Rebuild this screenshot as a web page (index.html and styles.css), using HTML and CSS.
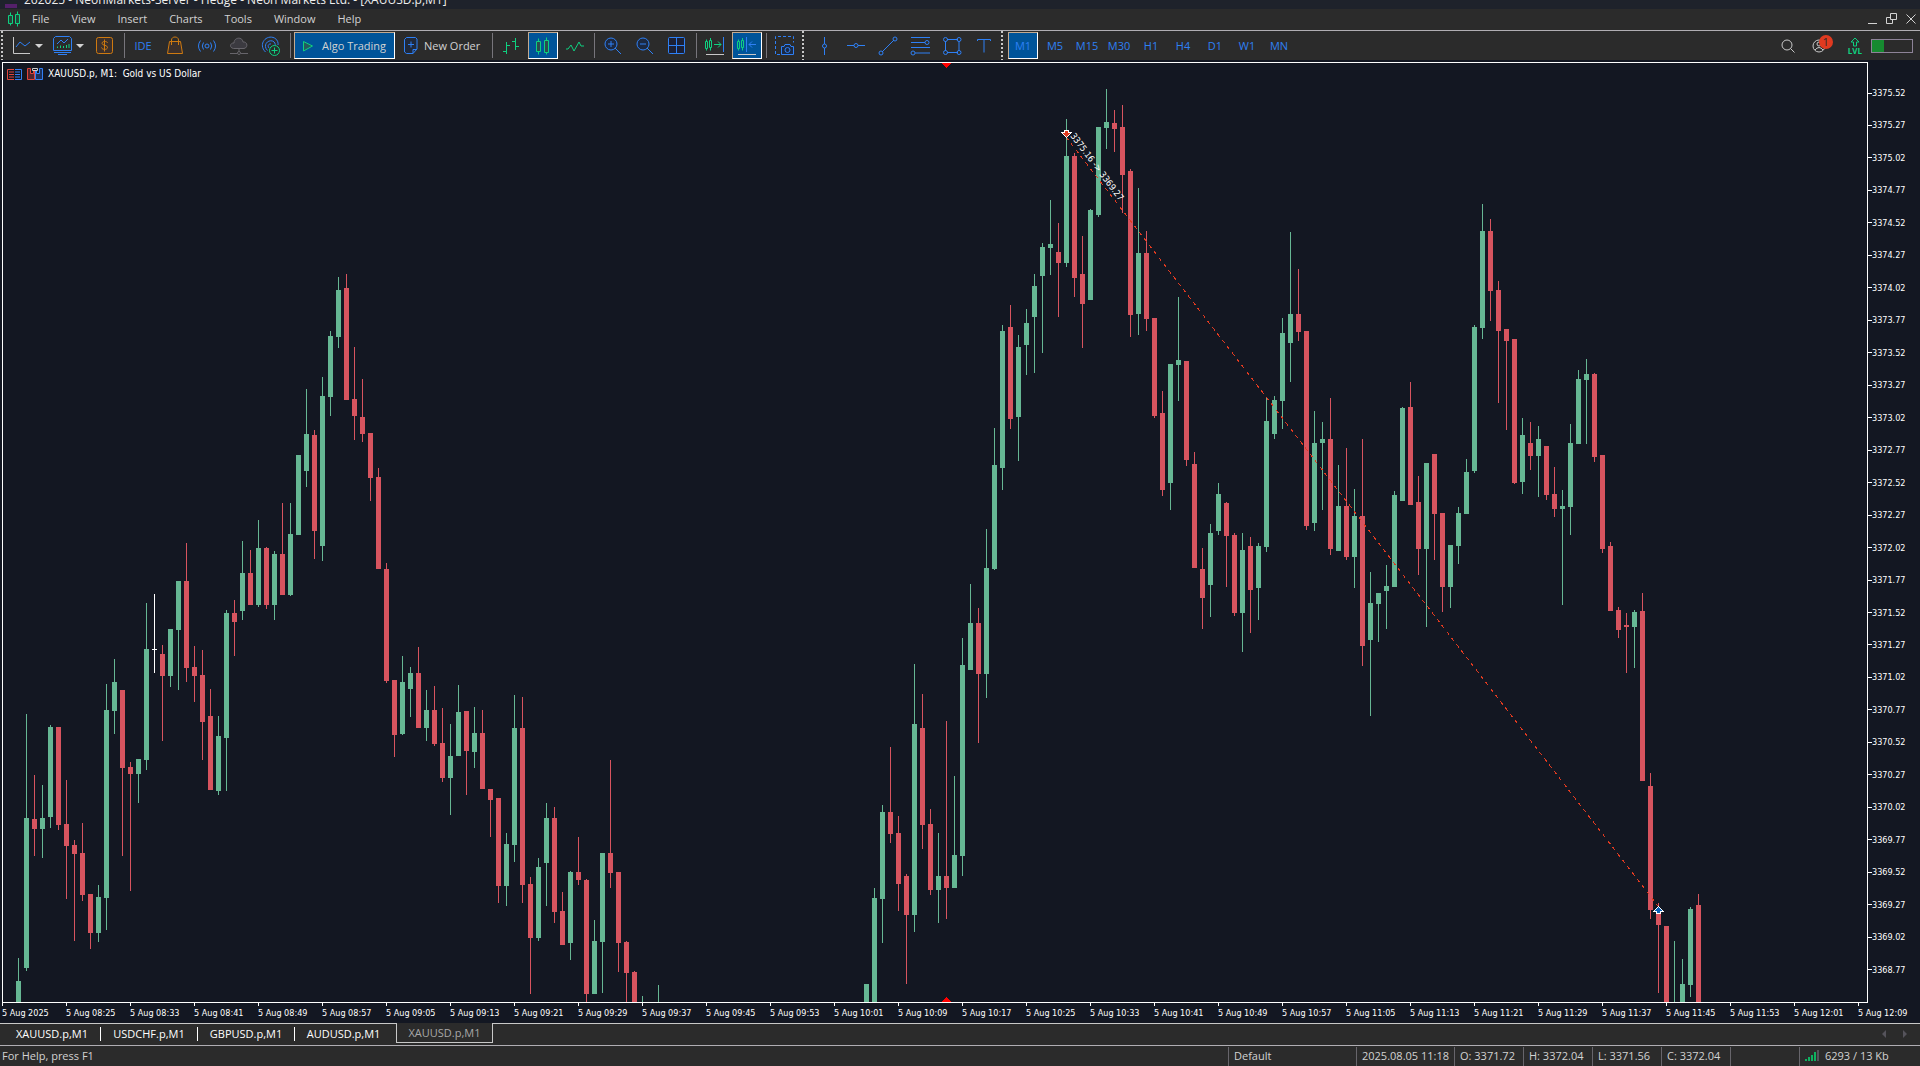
FILE: index.html
```html
<!DOCTYPE html>
<html lang="en">
<head>
    <meta charset="UTF-8">
    <meta name="viewport" content="width=device-width, initial-scale=1.0">
    <title>XAUUSD.p,M1</title>
    <link rel="stylesheet" href="styles.css">
</head>
<body>

<!-- Window title -->
<header class="title-bar">
    <span class="app-mark"></span>
    <span>262025 - NeonMarkets-Server - Hedge - Neon Markets Ltd. - [XAUUSD.p,M1]</span>
</header>

<!-- Main menu -->
<nav class="menu-bar">
    <svg class="menu-logo" width="12" height="16" viewBox="0 0 12 16"><path d="M.5 4.500h4v8h-4zM7.500 3.500h4v9h-4zM2.500 1.500v3M2.500 12.500v2M9.500.5v3M9.500 12.500v3"/></svg>
    <button>File</button>
    <button>View</button>
    <button>Insert</button>
    <button>Charts</button>
    <button>Tools</button>
    <button>Window</button>
    <button>Help</button>
    <div class="window-buttons">
        <button aria-label="Minimize"><svg width="10" height="12"><path d="M0 10.500h9"/></svg></button>
        <button aria-label="Restore"><svg width="12" height="12"><path d="M4.500.5h6v6h-6zM4 4.500H.5v6h6V7"/></svg></button>
        <button aria-label="Close"><svg width="10" height="12"><path d="M.5 1.500l9 9M9.500 1.500l-9 9"/></svg></button>
    </div>
</nav>

<!-- Toolbar -->
<div class="toolbar">
    <i class="grip"></i>
    <button class="split" aria-label="Indicators">
        <svg class="blue" width="20" height="20"><path class="gray" d="M1.500 1v16.500H18"/><path d="M4 11l4-5 5 4 5-4"/></svg>
        <i class="arrow"></i>
    </button>
    <button class="split" aria-label="Templates">
        <svg class="blue" width="20" height="20"><path d="M2.500.5h14l2 2v12H.5v-12zM1 16.500h17M5 18.500h9M4 8l4-4 3 3 4-4"/><path class="green" d="M4.500 12v-1.500M7.500 12V9.500M10.500 12v-2M13.500 12V9M16 12V8"/></svg>
        <i class="arrow"></i>
    </button>
    <button class="tool" aria-label="Symbols"><svg class="orange" width="20" height="20"><rect x="1.500" y="1.500" width="16" height="16" rx="2" fill="#3c302b"/><path d="M12.500 7c0-2-5.500-2.200-5.500.3C7 10 12.500 8.500 12.500 11.500c0 2.500-5.500 2.500-6 0M9.500 3.500v12"/></svg></button>
    <i class="sep"></i>
    <button class="tool text-tool">IDE</button>
    <button class="tool" aria-label="Market"><svg class="orange" width="20" height="20"><path fill="#3c302b" d="M4.500 5.500h11l2 12h-15z"/><path d="M6.500 9V4c0-4 7-4 7 0v5"/></svg></button>
    <button class="tool" aria-label="Signals"><svg class="blue" width="20" height="20"><circle cx="10" cy="10" r="2"/><path d="M6.500 6.500q-2.500 3.500 0 7M13.500 6.500q2.500 3.500 0 7M3.500 4.500q-4 5.500 0 11M16.500 4.500q4 5.500 0 11"/></svg></button>
    <button class="tool" aria-label="VPS"><svg class="dim" width="20" height="20"><path fill="#3b3a40" d="M4.500 12.500c-5-1-3-6 .5-5.500 0-6 8.500-6.500 9-1 5-.5 5 6 1 6.500z"/><path d="M10 12.500v3M1 17.500h7M12 17.500h7"/><circle cx="10" cy="17" r="1.500"/></svg></button>
    <button class="tool" aria-label="Community"><svg class="blue" width="20" height="20"><path d="M4.500 16c-8-8 1-18 9-14 3 1.500 4 5 3.500 7M6.500 14.500C1.500 9.500 6.500 3.500 11.500 5c2.500 1 3 3 2.500 4.500M8 12C6 9.500 8 7.500 10 8"/><g class="green"><circle cx="13.500" cy="14.500" r="5" fill="#24302c"/><path d="M10.500 14.500h6M13.500 11.500v6"/></g></svg></button>
    <i class="sep"></i>
    <button class="wide algo active"><svg class="green" width="12" height="12"><path fill="#265b5e" d="M1.500 1.500l9 4.500-9 5z"/></svg>Algo Trading</button>
    <button class="wide order"><svg class="blue" width="14" height="18"><path fill="#20293b" d="M2.500.5h9l1.500 1.500v10l-4 4.500H2.500L.5 15V2.500z"/><path d="M4 7.500h6M7 4.500v6M9 16.500v-4h4"/></svg>New Order</button>
    <i class="sep"></i>
    <button class="tool" aria-label="Bar chart"><svg class="green" width="20" height="20"><path d="M5.500 6v12M2 15.500h3.500M5.500 9.500H9M14.500 2v12M11 5.500h3.500M14.500 10.500H18"/></svg></button>
    <button class="tool active" aria-label="Candlesticks"><svg class="green" width="20" height="20"><path fill="#2b4c4f" d="M3.500 5.500h4v10h-4zM11.500 4.500h4v12h-4z"/><path d="M5.500 2.500v3M5.500 15.500v3M13.500 1.500v3M13.500 16.500v2"/></svg></button>
    <button class="tool" aria-label="Line chart"><svg class="green" width="20" height="20"><path d="M1 13h2l3-4 3 6 5-9 2 4h3"/></svg></button>
    <i class="sep"></i>
    <button class="tool" aria-label="Zoom in"><svg class="blue" width="20" height="20"><circle cx="8" cy="8" r="6" fill="#1c2942"/><path d="M5 8h6M8 5v6M12 12l6 6"/></svg></button>
    <button class="tool" aria-label="Zoom out"><svg class="blue" width="20" height="20"><circle cx="8" cy="8" r="6" fill="#1c2942"/><path d="M5 8h6M12 12l6 6"/></svg></button>
    <button class="tool" aria-label="Tile windows"><svg class="blue" width="20" height="20"><rect x="1.500" y="1.500" width="16" height="16" rx="1" fill="#1c2035"/><path d="M9.500 1.500v16M1.500 9.500h16"/></svg></button>
    <i class="sep"></i>
    <button class="tool" aria-label="Shift end"><svg class="green" width="20" height="20"><path d="M.5 5.500h2v7h-2zM4.500 4.500h2v7h-2zM1.500 3.500v2M1.500 12.500v2M5.500 2v2.500M5.500 11.500v3M9 8.500h7M13 5.500l3 3-3 3"/><path class="blue" d="M18.500 1v15"/><path class="gray" d="M1 18.500h18"/></svg></button>
    <button class="tool active" aria-label="Auto scroll"><svg class="green" width="20" height="20"><path d="M.5 5.500h2v7h-2zM4.500 4.500h2v7h-2zM1.500 3.500v2M1.500 12.500v2M5.500 2v2.500M5.500 11.500v3"/><path class="blue" d="M9.500 1v15M12 8.500h7M15 5.500l-3 3 3 3"/><path class="gray" d="M1 18.500h18"/></svg></button>
    <i class="sep"></i>
    <button class="tool" aria-label="Screenshot"><svg class="blue" width="20" height="20"><path stroke-dasharray="3 2" d="M5 18.500H.5V.5h18v6"/><path fill="#1c2942" d="M6.500 18.500v-8H9l1-2h5l1 2h2.500v8z"/><circle cx="12.500" cy="14" r="2.500"/></svg></button>
    <i class="grip"></i>
    <button class="tool" aria-label="Vertical line"><svg class="blue" width="20" height="20"><path d="M10.500 1v7M10.500 12v7"/><circle cx="10.500" cy="10" r="2"/></svg></button>
    <button class="tool" aria-label="Horizontal line"><svg class="blue" width="20" height="20"><path d="M1 9.500h7M12 9.500h7"/><circle cx="10" cy="9.500" r="2"/></svg></button>
    <button class="tool" aria-label="Trendline"><svg class="blue" width="20" height="20"><path d="M4 16L16 4"/><circle cx="3" cy="17" r="2"/><circle cx="17" cy="3" r="2"/></svg></button>
    <button class="tool" aria-label="Fibonacci"><svg class="blue" width="20" height="20"><path d="M1 1.500h19M1 6.500h14M1 11.500h19M5 17h15"/><circle cx="17" cy="6.500" r="2"/><circle cx="3" cy="17" r="2"/></svg></button>
    <button class="tool" aria-label="Shapes"><svg class="blue" width="20" height="20"><path d="M5 3.500h11M5 16.500h11M3.500 5v10M17 5v10"/><circle cx="3.500" cy="3.500" r="2"/><circle cx="17" cy="3.500" r="2"/><circle cx="3.500" cy="16.500" r="2"/><circle cx="17" cy="16.500" r="2"/></svg></button>
    <button class="tool" aria-label="Text"><svg class="blue" width="20" height="20"><path d="M3.500 5V3.500h13V5M10 3.500v13"/></svg></button>
    <i class="grip"></i>
    <button class="tool text-tool active">M1</button>
    <button class="tool text-tool">M5</button>
    <button class="tool text-tool">M15</button>
    <button class="tool text-tool">M30</button>
    <button class="tool text-tool">H1</button>
    <button class="tool text-tool">H4</button>
    <button class="tool text-tool">D1</button>
    <button class="tool text-tool">W1</button>
    <button class="tool text-tool">MN</button>

    <div class="toolbar-right">
        <button aria-label="Search"><svg class="gray" width="14" height="14"><circle cx="6" cy="6" r="5"/><path d="M9.500 9.500l4 4"/></svg></button>
        <button class="account" aria-label="Account"><svg class="gray" width="14" height="14"><circle cx="7" cy="7" r="6"/><circle cx="7" cy="5" r="2"/><path d="M3 11q4-5 8 0"/></svg><span class="badge">1</span></button>
        <button class="level"><svg class="green" width="10" height="10"><path d="M5 1l4 4H6.500v4h-3V5H1z"/></svg><span>LVL</span></button>
        <div class="battery"><div class="battery-fill"></div></div>
    </div>
</div>

<!-- Chart window -->
<main class="chart">
    <div class="plot">
        <svg id="candles" class="candles" width="100%" height="100%"></svg>
        <div class="chart-title">
            <svg width="15" height="11" fill="none"><path stroke="#e0463c" d="M7 .5H.5v10H7M2 3h5M2 5.500h5M2 8h5"/><path stroke="#3280f5" d="M8 .5h6.500v10H8M8 3h5M8 5.500h5M8 8h5"/></svg>
            <svg width="16" height="12" fill="none"><path stroke="#e0463c" fill="#54242c" d="M.5.5h3v5h3v-3h1v9h-7z"/><path stroke="#3280f5" fill="#1c315c" d="M15.500.5h-3v5h-3v-3h-1v9h7z"/><path stroke="#ccc" d="M5.500.5h5v2h-5z"/></svg>
            <span>XAUUSD.p, M1:&nbsp; Gold vs US Dollar</span>
        </div>
    </div>
    <div id="price-axis" class="price-axis"></div>
    <div id="time-axis" class="time-axis"></div>
</main>

<!-- Chart tabs -->
<div class="tabs">
    <button class="tab">XAUUSD.p,M1</button>
    <button class="tab">USDCHF.p,M1</button>
    <button class="tab">GBPUSD.p,M1</button>
    <button class="tab">AUDUSD.p,M1</button>
    <button class="tab selected">XAUUSD.p,M1</button>
    <div class="tab-scroll">
        <button aria-label="Scroll left"><svg width="4" height="8"><path d="M4 0v8L0 4z"/></svg></button>
        <button aria-label="Scroll right"><svg width="4" height="8"><path d="M0 0v8l4-4z"/></svg></button>
    </div>
</div>

<!-- Status bar -->
<footer class="status-bar">
    <div class="help">For Help, press F1</div>
    <div class="cell profile">Default</div>
    <div class="cell date">2025.08.05 11:18</div>
    <div class="cell">O: 3371.72</div>
    <div class="cell">H: 3372.04</div>
    <div class="cell">L: 3371.56</div>
    <div class="cell">C: 3372.04</div>
    <div class="cell"></div>
    <div class="cell traffic">
        <svg width="14" height="12"><path d="M1 11v-2M4 11V7M7 11V5M10 11V2"/><path class="off" d="M13 11V0"/></svg>
        6293 / 13 Kb
    </div>
</footer>

<script src="chart.js"></script>
</body>
</html>
```

FILE: styles.css
```css
/* General styling */
* {
    box-sizing: border-box;
}

body {
    margin: 0;
    height: 100vh;
    display: flex;
    flex-direction: column;
    overflow: hidden;
    background-color: #2b2b2b;
    color: #d2d2d2;
    font-family: "Open Sans", "Noto Sans", sans-serif;
    font-size: 11px;
    line-height: 16px;
}

button {
    margin: 0;
    padding: 0;
    border: none;
    background: none;
    color: inherit;
    font: inherit;
    white-space: nowrap;
}

svg {
    display: block;
    flex: none;
}

/* Window title, partly scrolled off the top */
.title-bar {
    height: 9px;
    flex: none;
    display: flex;
    align-items: flex-end;
    gap: 7px;
    padding: 0 5px 1px;
    overflow: hidden;
    background-color: #1e222b;
    color: #eee;
    font-size: 12px;
    white-space: nowrap;
}

.app-mark {
    width: 12px;
    height: 4px;
    background-color: #54206a;
}

/* Menu */
.menu-bar {
    height: 22px;
    flex: none;
    display: flex;
    align-items: center;
    padding: 0 0 1px 8px;
    border-bottom: 1px solid #b0aeb3;
}

.menu-logo {
    margin-right: 1px;
    fill: #24443a;
    stroke: #0fd080;
}

.menu-bar > button {
    padding: 0 11px;
}

.window-buttons {
    display: flex;
    gap: 8px;
    margin-left: auto;
    padding-right: 4px;
}

.window-buttons svg {
    fill: none;
    stroke: #d2d2d2;
}

/* Toolbar */
.toolbar {
    height: 29px;
    flex: none;
    display: flex;
    align-items: center;
}

.toolbar svg {
    fill: none;
    stroke: currentColor;
}

.toolbar svg .gray,
.toolbar svg .blue,
.toolbar svg .green {
    stroke: currentColor;
}

.blue {
    color: #2e80f5;
}

.green {
    color: #0fd080;
}

.orange {
    color: #cf7a10;
}

.gray {
    color: #c8c8c8;
}

.dim {
    color: #67656b;
}

.grip {
    width: 2px;
    height: 29px;
    flex: none;
    margin: 0 4px 0 1px;
    background: repeating-linear-gradient(#c8c8c8 0 2px, transparent 2px 4px);
}

.sep {
    width: 1px;
    height: 25px;
    flex: none;
    margin: 0 2px 0 3px;
    background-color: #77757b;
}

.split {
    width: 41px;
    height: 27px;
    display: flex;
    align-items: center;
    gap: 3px;
    padding-left: 5px;
}

.arrow {
    border: 4px solid transparent;
    border-top-color: #d2d2d2;
    border-bottom: none;
}

.tool {
    width: 30px;
    height: 27px;
    flex: none;
    display: flex;
    align-items: center;
    justify-content: center;
    margin: 0 1px;
}

.text-tool {
    color: #2e80f5;
}

.active {
    background-color: #005499;
    border: 1px solid #fff;
    border-top-color: #c3aa91;
    border-left-color: #c3aa91;
}

.wide {
    height: 27px;
    flex: none;
    display: flex;
    align-items: center;
    margin: 0 1px;
}

.algo {
    width: 101px;
    gap: 8px;
    padding-left: 7px;
}

.order {
    width: 91px;
    gap: 6px;
    padding-left: 7px;
}

.toolbar-right {
    display: flex;
    align-items: center;
    margin-left: auto;
    padding-right: 7px;
}

.account {
    position: relative;
    margin: 0 22px 0 17px;
}

.badge {
    position: absolute;
    top: -4px;
    left: 7px;
    width: 14px;
    height: 14px;
    border-radius: 50%;
    background-color: #e03a20;
    color: #2b2b2b;
    line-height: 14px;
}

.level {
    display: flex;
    flex-direction: column;
    align-items: center;
    margin-right: 9px;
    color: #0fd080;
    font-size: 8px;
    font-weight: bold;
    line-height: 8px;
}

.battery {
    width: 42px;
    height: 14px;
    border: 1px solid #8d8398;
}

.battery-fill {
    width: 12px;
    height: 12px;
    background-color: #168a30;
}

/* Chart */
.chart {
    flex: 1;
    min-height: 0;
    display: grid;
    grid-template-columns: 1fr 52px;
    grid-template-rows: 1fr 20px;
    padding: 2px 0 0 2px;
    background-color: #131722;
    color: #fff;
    font-family: "DejaVu Sans Condensed", "DejaVu Sans", sans-serif;
    font-size: 9px;
    line-height: 14px;
}

.plot {
    position: relative;
    min-width: 0;
    min-height: 0;
    border: 1px solid #fff;
    overflow: hidden;
}

/* Title lies over the candles */
.chart-title {
    position: absolute;
    top: 4px;
    left: 4px;
    display: flex;
    align-items: center;
    gap: 5px;
    font-size: 10px;
}

.candles {
    position: absolute;
    top: 0;
    left: 0;
    shape-rendering: crispEdges;
}

.up {
    fill: #66b794;
}

.down {
    fill: #d7545f;
}

.flat {
    fill: #fff;
}

.period {
    fill: #f00;
}

.deal-line {
    stroke: #e03a20;
    stroke-dasharray: 4 4;
}

.deal-label {
    fill: #fff;
}

.deal {
    stroke: #fff;
}

.deal.sell {
    fill: #e03a20;
}

.deal.buy {
    fill: #0a62b8;
}

.price-axis {
    display: flex;
    flex-direction: column;
    justify-content: space-between;
    padding: 24px 0 26px;
}

.price {
    display: flex;
    align-items: center;
}

.price::before {
    content: "";
    width: 4px;
    height: 1px;
    background-color: #fff;
}

.time-axis {
    grid-column: 1 / 3;
    display: flex;
    overflow: hidden;
}

.time {
    width: 64px;
    flex: none;
    white-space: nowrap;
}

.time::before {
    content: "";
    display: block;
    width: 1px;
    height: 3px;
    background-color: #fff;
}

/* Chart tabs */
.tabs {
    height: 22px;
    flex: none;
    display: flex;
    align-items: flex-start;
    padding-left: 4px;
    border-top: 1px solid #c8c8c8;
    color: #fff;
}

.tab {
    width: 97px;
    height: 14px;
    margin-top: 3px;
    border-right: 1px solid #fff;
    line-height: 14px;
}

.tab:nth-child(4) {
    border-right: none;
}

.tab.selected {
    height: 20px;
    margin-top: -1px;
    margin-left: 4px;
    border: 1px solid #c8c8c8;
    border-top: none;
    background-color: #2b2b2b;
    color: #a8a8a8;
}

.tab-scroll {
    display: flex;
    gap: 17px;
    margin: 6px 13px 0 auto;
    fill: #55535b;
}

/* Status bar */
.status-bar {
    height: 21px;
    flex: none;
    display: flex;
    align-items: center;
    border-top: 1px solid #b0aeb3;
    white-space: nowrap;
}

.help {
    flex: 1;
    padding-left: 2px;
}

.cell {
    width: 69px;
    height: 19px;
    padding-left: 5px;
    border-left: 1px solid #67656b;
    line-height: 18px;
}

.profile {
    width: 128px;
}

.date {
    width: 98px;
}

.traffic {
    width: 121px;
    display: flex;
    align-items: center;
    gap: 6px;
}

.traffic svg {
    stroke: #0fb060;
    stroke-width: 2;
}

.traffic .off {
    stroke: #55535b;
}
```

FILE: chart.js
```javascript
const BAR_STEP = 8;
const FIRST_BAR_X = 15;
const PLOT_TOP = 63;   // window y of the first pixel row inside the plot
const NS = "http://www.w3.org/2000/svg";

// [direction, high, body top, body bottom, low] in window pixels
const runs = [
    { start: 0, bars: [
        ["up", 958, 981, 1002, 1002], ["up", 714, 818, 968, 971], ["down", 775, 819, 829, 856], ["up", 785, 818, 829, 858],
        ["up", 725, 727, 817, 828], ["down", 727, 727, 825, 830], ["down", 780, 824, 846, 899], ["down", 840, 845, 854, 941],
        ["down", 823, 853, 895, 901], ["down", 894, 894, 933, 949], ["up", 885, 897, 933, 942], ["up", 684, 710, 898, 930],
        ["up", 659, 682, 711, 734], ["down", 690, 690, 768, 856], ["down", 762, 767, 774, 891], ["up", 759, 759, 774, 803],
        ["up", 603, 649, 760, 770], ["flat", 594, 649, 650, 673], ["down", 645, 654, 676, 741], ["up", 629, 629, 676, 687],
        ["up", 581, 581, 630, 690], ["down", 543, 581, 668, 682], ["down", 646, 667, 676, 702], ["down", 650, 675, 722, 760],
        ["down", 689, 716, 790, 790], ["up", 716, 736, 791, 795], ["up", 610, 613, 738, 791], ["down", 600, 613, 622, 656],
        ["up", 541, 573, 611, 620], ["down", 550, 573, 605, 605], ["up", 520, 548, 605, 607], ["down", 547, 548, 605, 609],
        ["up", 551, 554, 605, 620], ["down", 503, 554, 595, 595], ["up", 503, 534, 595, 596], ["up", 455, 455, 535, 535],
        ["up", 389, 434, 471, 487], ["down", 430, 435, 531, 559], ["up", 377, 396, 546, 561], ["up", 331, 336, 397, 416],
        ["up", 277, 290, 337, 348], ["down", 274, 288, 400, 400], ["down", 347, 399, 416, 440], ["down", 379, 417, 434, 442],
        ["down", 433, 433, 478, 501], ["down", 468, 477, 569, 569], ["down", 563, 569, 681, 683], ["down", 680, 680, 735, 757],
        ["up", 656, 682, 734, 735], ["up", 667, 673, 689, 717], ["down", 647, 673, 728, 728], ["up", 690, 710, 728, 741],
        ["down", 686, 710, 744, 746], ["down", 708, 743, 778, 782], ["up", 724, 756, 778, 815], ["up", 685, 712, 756, 756],
        ["down", 711, 711, 751, 795], ["up", 707, 733, 752, 768], ["down", 710, 733, 789, 789], ["down", 789, 789, 800, 837],
        ["down", 798, 798, 886, 903], ["up", 833, 844, 886, 906], ["up", 695, 728, 845, 862], ["down", 697, 728, 885, 903],
        ["down", 877, 884, 938, 994], ["up", 858, 867, 938, 941], ["up", 803, 818, 863, 906], ["down", 807, 818, 912, 923],
        ["down", 892, 911, 945, 945], ["up", 871, 872, 943, 960], ["down", 837, 872, 880, 885], ["down", 879, 880, 994, 1002],
        ["up", 920, 941, 994, 994], ["up", 853, 853, 942, 993], ["down", 760, 853, 873, 888], ["down", 872, 872, 943, 972],
        ["down", 941, 942, 973, 1002], ["down", 971, 972, 1002, 1002], ["up", 996, 1002, 1002, 1002]
    ] },
    { start: 80, bars: [["up", 985, 1002, 1002, 1002]] },
    { start: 106, bars: [
        ["up", 984, 984, 1002, 1002], ["up", 888, 898, 1002, 1002], ["up", 805, 812, 899, 943], ["down", 747, 812, 834, 843],
        ["down", 816, 833, 884, 911], ["down", 874, 876, 915, 984], ["up", 664, 724, 915, 932], ["down", 694, 728, 825, 849],
        ["down", 809, 824, 890, 895], ["up", 833, 876, 890, 923], ["down", 721, 876, 888, 919], ["up", 776, 855, 888, 888],
        ["up", 638, 665, 856, 876], ["up", 584, 623, 670, 670], ["down", 608, 623, 674, 743], ["up", 529, 568, 674, 698],
        ["up", 428, 465, 569, 570], ["up", 325, 331, 468, 490], ["down", 305, 327, 419, 429], ["up", 335, 347, 417, 461],
        ["up", 309, 323, 345, 375], ["up", 274, 286, 317, 373], ["up", 243, 247, 276, 353], ["up", 200, 244, 248, 275],
        ["down", 223, 252, 263, 317], ["up", 119, 156, 263, 267], ["down", 153, 156, 278, 297], ["down", 236, 274, 304, 348],
        ["up", 209, 210, 300, 300], ["up", 127, 127, 215, 217], ["up", 89, 122, 128, 149], ["down", 110, 123, 129, 152],
        ["down", 105, 127, 175, 213], ["down", 169, 171, 315, 337], ["up", 188, 253, 314, 335], ["down", 231, 253, 319, 331],
        ["down", 318, 318, 416, 418], ["down", 391, 413, 490, 496], ["up", 364, 364, 483, 510], ["up", 297, 360, 365, 401],
        ["down", 361, 361, 460, 466], ["down", 452, 464, 568, 568], ["down", 548, 569, 598, 629], ["up", 524, 533, 585, 617],
        ["up", 483, 494, 531, 535], ["down", 502, 503, 536, 587], ["down", 533, 535, 613, 616], ["up", 533, 550, 613, 652],
        ["down", 537, 546, 590, 633], ["up", 543, 546, 588, 620], ["up", 398, 421, 547, 552], ["up", 396, 400, 434, 439],
        ["up", 318, 333, 401, 429], ["up", 232, 314, 343, 382], ["down", 269, 314, 332, 341], ["down", 331, 331, 526, 530],
        ["up", 411, 443, 523, 531], ["up", 422, 439, 443, 510], ["down", 398, 439, 549, 555], ["up", 465, 506, 551, 551],
        ["down", 448, 506, 557, 560], ["up", 489, 516, 557, 588], ["down", 439, 516, 646, 666], ["up", 572, 603, 640, 716],
        ["up", 593, 593, 604, 642], ["up", 565, 586, 591, 629], ["up", 491, 495, 587, 587], ["up", 407, 408, 501, 501],
        ["down", 382, 407, 505, 505], ["down", 476, 502, 549, 575], ["up", 463, 463, 549, 627], ["down", 454, 454, 514, 560],
        ["down", 513, 513, 587, 612], ["up", 545, 545, 587, 608], ["up", 507, 513, 546, 564], ["up", 459, 472, 514, 514],
        ["up", 325, 327, 471, 473], ["up", 204, 231, 328, 339], ["down", 219, 231, 291, 321], ["down", 281, 290, 331, 403],
        ["down", 329, 329, 341, 430], ["down", 339, 339, 483, 484], ["up", 418, 435, 482, 494], ["down", 422, 443, 456, 470],
        ["up", 426, 439, 456, 497], ["down", 446, 446, 495, 500], ["down", 467, 494, 509, 517], ["up", 490, 506, 509, 605],
        ["up", 424, 443, 507, 535], ["up", 370, 379, 444, 444], ["up", 359, 374, 380, 444], ["down", 373, 374, 457, 462],
        ["down", 455, 455, 549, 553], ["down", 542, 546, 611, 611], ["down", 607, 610, 630, 638], ["down", 613, 625, 627, 673],
        ["up", 610, 612, 627, 668], ["down", 593, 611, 781, 781], ["down", 773, 786, 910, 919], ["down", 903, 910, 925, 993],
        ["down", 926, 926, 1002, 1002], ["up", 941, 1002, 1002, 1002], ["up", 959, 984, 1002, 1002], ["up", 907, 909, 985, 997],
        ["down", 894, 905, 1002, 1002]
    ] }
];

const svg = document.getElementById("candles");

function add(tag, attrs, text) {
    const el = document.createElementNS(NS, tag);
    for (const name in attrs) {
        el.setAttribute(name, attrs[name]);
    }
    if (text) {
        el.textContent = text;
    }
    svg.appendChild(el);
}

// Candles
runs.forEach(run => {
    run.bars.forEach(([dir, high, top, bottom, low], i) => {
        const x = FIRST_BAR_X + (run.start + i) * BAR_STEP;
        add("rect", { class: dir, x: x, y: high - PLOT_TOP, width: 1, height: low - high });
        add("rect", { class: dir, x: x - 2, y: top - PLOT_TOP, width: 5, height: bottom - top });
    });
});

// Period markers on the top and bottom edge
add("path", { class: "period", d: "M939 0h9l-4.500 5z" });
add("path", { class: "period", d: "M939 939h9l-4.500 -5z" });

// Closed deal: entry, exit and the line between them
add("line", { class: "deal-line", x1: 1063, y1: 74, x2: 1655, y2: 843 });
add("text", { class: "deal-label", transform: "translate(1067 73) rotate(53)" }, "3375.16 -> 3369.27");
add("path", { class: "deal sell", d: "M1061.500 67.500h4v2h3l-5 5-5-5h3z" });
add("path", { class: "deal buy", d: "M1653.500 850.500h4v-2h3l-5-5-5 5h3z" });

// Price scale, 0.25 per step
const priceAxis = document.getElementById("price-axis");
[
    "3375.52", "3375.27", "3375.02", "3374.77", "3374.52", "3374.27", "3374.02",
    "3373.77", "3373.52", "3373.27", "3373.02", "3372.77", "3372.52", "3372.27",
    "3372.02", "3371.77", "3371.52", "3371.27", "3371.02", "3370.77", "3370.52",
    "3370.27", "3370.02", "3369.77", "3369.52", "3369.27", "3369.02", "3368.77"
].forEach(price => {
    const el = document.createElement("div");
    el.className = "price";
    el.textContent = price;
    priceAxis.appendChild(el);
});

// Time scale, one label every 8 bars
const timeAxis = document.getElementById("time-axis");
for (let i = 0; i < 30; i++) {
    const minutes = 8 * 60 + 17 + i * 8;
    const hh = String(Math.floor(minutes / 60)).padStart(2, "0");
    const mm = String(minutes % 60).padStart(2, "0");
    const el = document.createElement("div");
    el.className = "time";
    el.textContent = i === 0 ? "5 Aug 2025" : `5 Aug ${hh}:${mm}`;
    timeAxis.appendChild(el);
}
```
